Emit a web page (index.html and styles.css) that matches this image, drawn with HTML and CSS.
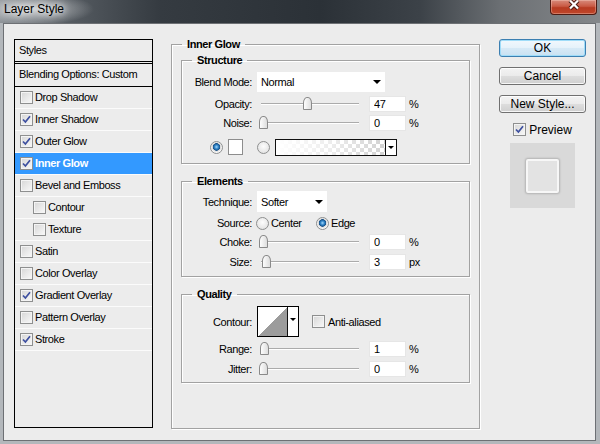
FILE: index.html
```html
<!DOCTYPE html>
<html lang="en">
<head>
    <meta charset="UTF-8">
    <meta name="viewport" content="width=device-width, initial-scale=1.0">
    <title>Layer Style</title>
    <link rel="stylesheet" href="styles.css">
</head>
<body>
    <div class="window">
        <div class="titlebar">
            <span class="title">Layer Style</span>
            <div class="close-btn">
                <svg width="14" height="11" viewBox="0 0 14 11">
                    <path d="M3 0.5 L11 8.5 M11 0.5 L3 8.5" stroke="#4a1a12" stroke-width="4.2"/>
                    <path d="M3 0.5 L11 8.5 M11 0.5 L3 8.5" stroke="#fff" stroke-width="2.2"/>
                </svg>
            </div>
        </div>

        <div class="dialog">
            <!-- liste des styles -->
            <div class="styles-list">
                <div class="list-head">Styles</div>
                <div class="list-blend">Blending Options: Custom</div>
                <div class="list-item"><span class="check"></span>Drop Shadow</div>
                <div class="list-item"><span class="check"><svg viewBox="0 0 11 11"><path d="M2 5.5 L4.4 8 L9 2.2"/></svg></span>Inner Shadow</div>
                <div class="list-item"><span class="check"><svg viewBox="0 0 11 11"><path d="M2 5.5 L4.4 8 L9 2.2"/></svg></span>Outer Glow</div>
                <div class="list-item selected"><span class="check"><svg viewBox="0 0 11 11"><path d="M2 5.5 L4.4 8 L9 2.2"/></svg></span>Inner Glow</div>
                <div class="list-item"><span class="check"></span>Bevel and Emboss</div>
                <div class="list-item sub"><span class="check"></span>Contour</div>
                <div class="list-item sub"><span class="check"></span>Texture</div>
                <div class="list-item"><span class="check"></span>Satin</div>
                <div class="list-item"><span class="check"></span>Color Overlay</div>
                <div class="list-item"><span class="check"><svg viewBox="0 0 11 11"><path d="M2 5.5 L4.4 8 L9 2.2"/></svg></span>Gradient Overlay</div>
                <div class="list-item"><span class="check"></span>Pattern Overlay</div>
                <div class="list-item"><span class="check"><svg viewBox="0 0 11 11"><path d="M2 5.5 L4.4 8 L9 2.2"/></svg></span>Stroke</div>
            </div>

            <!-- panneau Inner Glow -->
            <fieldset class="group main-group">
                <legend>Inner Glow</legend>

                <fieldset class="group sub-group structure">
                    <legend>Structure</legend>
                    <div class="row blend-row">
                        <span class="lbl">Blend Mode:</span>
                        <div class="select select-wide">Normal<span class="arrow"></span></div>
                    </div>
                    <div class="row slider-row">
                        <span class="lbl">Opacity:</span>
                        <div class="slider"><span class="track"></span><span class="thumb" style="left: 46px"></span></div>
                        <input class="num" type="text" value="47" readonly>
                        <span class="unit">%</span>
                    </div>
                    <div class="row slider-row">
                        <span class="lbl">Noise:</span>
                        <div class="slider"><span class="track"></span><span class="thumb" style="left: 2px"></span></div>
                        <input class="num" type="text" value="0" readonly>
                        <span class="unit">%</span>
                    </div>
                    <div class="row color-row">
                        <span class="radio on"></span>
                        <span class="swatch"></span>
                        <span class="radio radio-gap"></span>
                        <div class="gradient-pick"><span class="grad"></span><span class="grad-arrow"><span class="arrow"></span></span></div>
                    </div>
                </fieldset>

                <fieldset class="group sub-group elements">
                    <legend>Elements</legend>
                    <div class="row technique-row">
                        <span class="lbl">Technique:</span>
                        <div class="select select-small">Softer<span class="arrow"></span></div>
                    </div>
                    <div class="row source-row">
                        <span class="lbl">Source:</span>
                        <span class="opt opt-first"><span class="radio"></span><span class="opt-text">Center</span></span>
                        <span class="opt"><span class="radio on"></span><span class="opt-text">Edge</span></span>
                    </div>
                    <div class="row slider-row tall">
                        <span class="lbl">Choke:</span>
                        <div class="slider"><span class="track"></span><span class="thumb" style="left: 2px"></span></div>
                        <input class="num" type="text" value="0" readonly>
                        <span class="unit">%</span>
                    </div>
                    <div class="row slider-row tall">
                        <span class="lbl">Size:</span>
                        <div class="slider"><span class="track"></span><span class="thumb" style="left: 5px"></span></div>
                        <input class="num" type="text" value="3" readonly>
                        <span class="unit">px</span>
                    </div>
                </fieldset>

                <fieldset class="group sub-group quality">
                    <legend>Quality</legend>
                    <div class="row contour-row">
                        <span class="lbl">Contour:</span>
                        <div class="contour"><span class="curve"></span><span class="contour-arrow"><span class="arrow"></span></span></div>
                        <span class="check anti"></span>
                        <span class="opt-text">Anti-aliased</span>
                    </div>
                    <div class="row slider-row range-row">
                        <span class="lbl">Range:</span>
                        <div class="slider"><span class="track"></span><span class="thumb" style="left: 3px"></span></div>
                        <input class="num" type="text" value="1" readonly>
                        <span class="unit">%</span>
                    </div>
                    <div class="row slider-row range-row">
                        <span class="lbl">Jitter:</span>
                        <div class="slider"><span class="track"></span><span class="thumb" style="left: 2px"></span></div>
                        <input class="num" type="text" value="0" readonly>
                        <span class="unit">%</span>
                    </div>
                </fieldset>
            </fieldset>

            <!-- boutons -->
            <div class="side">
                <button class="btn btn-default">OK</button>
                <button class="btn">Cancel</button>
                <button class="btn">New Style...</button>
                <div class="preview-check">
                    <span class="check"><svg viewBox="0 0 11 11"><path d="M2 5.5 L4.4 8 L9 2.2"/></svg></span>
                    <span>Preview</span>
                </div>
                <div class="preview">
                    <div class="preview-swatch"></div>
                </div>
            </div>
        </div>
    </div>
</body>
</html>
```

FILE: styles.css
```css
body {
    margin: 0;
    background: #b3b7bb;
    font-family: "Liberation Sans", Arial, sans-serif;
}

.window {
    width: 600px;
    height: 444px;
    display: flex;
    flex-direction: column;
}

/* Barre de titre */
.titlebar {
    height: 23px;
    flex: none;
    display: flex;
    justify-content: space-between;
    align-items: flex-start;
    background:
        radial-gradient(ellipse 60px 16px at 34px 9px, rgba(230, 232, 234, 0.75), rgba(230, 232, 234, 0)),
        linear-gradient(90deg, #8e9398 0, #555b61 70px, #353b41 160px, #2b3137 320px, #3c4248 420px, #6b6f73 500px, #85888b 600px);
}

.title {
    padding-left: 4px;
    font-size: 12px;
    line-height: 18px;
    color: #000;
    text-shadow: 0 0 6px #fff, 0 0 10px rgba(255, 255, 255, 0.8);
}

.close-btn {
    width: 45px;
    height: 14px;
    margin-right: 3px;
    border: 1px solid #4e1b13;
    border-top: none;
    border-radius: 0 0 4px 4px;
    background: linear-gradient(#d88b7c 0, #c95a44 45%, #b73b22 55%, #c0462a 100%);
    box-shadow: inset 0 0 0 1px rgba(255, 220, 210, 0.35);
    display: flex;
    justify-content: center;
    align-items: flex-start;
}

.close-btn svg {
    display: block;
}

/* Contenu */
.dialog {
    flex: 1;
    margin: 0 4px 3px 3px;
    border: 1px solid #6d7074;
    background: #ececec;
    display: flex;
    align-items: flex-start;
    padding: 13px 0 0 10px;
    font-size: 11px;
    letter-spacing: -0.4px;
    color: #000;
}

/* Liste des styles */
.styles-list {
    box-sizing: border-box;
    width: 139px;
    height: 389px;
    margin-top: 2px;
    border: 1px solid #000;
    background: #ececec;
}

.list-head {
    height: 21px;
    line-height: 20px;
    padding-left: 4px;
    border-bottom: 1px solid #000;
}

.list-blend {
    height: 22px;
    line-height: 21px;
    padding-left: 4px;
    margin-top: 1px;
    border-top: 1px solid #000;
    border-bottom: 1px solid #000;
}

.list-item {
    height: 20px;
    padding-bottom: 1px;
    display: flex;
    align-items: center;
    padding-left: 5px;
    border-bottom: 1px solid #fbfbfb;
}

.list-item.sub {
    padding-left: 18px;
}

.list-item .check {
    margin-right: 2px;
}

.list-item.selected {
    background: #3399ff;
    color: #fff;
    font-weight: bold;
}

.check {
    box-sizing: border-box;
    width: 13px;
    height: 13px;
    flex: none;
    border: 1px solid #8e8f8f;
    background: linear-gradient(135deg, #d6d6d6, #f9f9f9);
    box-shadow: inset 0 0 0 1px #f4f4f4;
}

.check svg {
    display: block;
    width: 11px;
    height: 11px;
}

.check path {
    fill: none;
    stroke: #3d4f9f;
    stroke-width: 1.7;
}

/* Groupes */
.group {
    margin: 0;
    padding: 0;
    min-width: 0;
    border: 1px solid #a2a2a2;
    box-shadow: 1px 1px 0 #fff, inset 1px 1px 0 #fff;
}

.group legend {
    font-weight: bold;
    line-height: 14px;
    padding: 0 5px;
}

.main-group {
    box-sizing: border-box;
    width: 309px;
    height: 392px;
    margin-left: 18px;
    padding: 0 9px;
}

.main-group > legend {
    margin-left: 1px;
}

.sub-group > legend {
    margin-left: 10px;
}

.structure {
    margin-top: 2px;
    padding-bottom: 7px;
}

.elements {
    margin-top: 10px;
    padding-bottom: 4px;
}

.quality {
    margin-top: 10px;
    padding-bottom: 3px;
}

.row {
    display: flex;
    align-items: center;
}

.lbl {
    width: 70px;
    flex: none;
    text-align: right;
}

.blend-row {
    margin-top: 5px;
    height: 20px;
}

.slider-row {
    height: 19px;
}

.blend-row + .slider-row {
    margin-top: 2px;
}

.slider-row.tall,
.range-row {
    height: 20px;
}

.select {
    box-sizing: border-box;
    height: 20px;
    margin-left: 5px;
    padding-left: 4px;
    background: #fff;
    display: flex;
    align-items: center;
    justify-content: space-between;
}

.select-wide {
    width: 128px;
}

.select-small {
    width: 70px;
    height: 21px;
}

.arrow {
    width: 0;
    height: 0;
    border-left: 4px solid transparent;
    border-right: 4px solid transparent;
    border-top: 4px solid #000;
    margin-right: 4px;
}

.slider {
    position: relative;
    width: 106px;
    height: 100%;
    margin-left: 5px;
    flex: none;
}

.track {
    position: absolute;
    left: 4px;
    right: 4px;
    top: 9px;
    height: 1px;
    background: #ababab;
    border-bottom: 1px solid #fff;
}

.thumb {
    position: absolute;
    top: 3px;
    box-sizing: border-box;
    width: 9px;
    height: 13px;
    border: 1px solid #8a8a8a;
    border-radius: 4px 4px 1px 1px / 6px 6px 1px 1px;
    background: linear-gradient(90deg, #fdfdfd, #dedede);
}

.num {
    box-sizing: border-box;
    width: 37px;
    height: 16px;
    margin: 0 0 0 6px;
    padding: 0 0 0 4px;
    border: 1px solid #e6e6e6;
    background: #fff;
    font: inherit;
    letter-spacing: inherit;
    color: #000;
    outline: none;
}

.unit {
    margin-left: 3px;
}

/* Couleur */
.color-row {
    margin-top: 6px;
    height: 18px;
    padding-left: 28px;
}

.radio {
    box-sizing: border-box;
    width: 13px;
    height: 13px;
    flex: none;
    border: 1px solid #8e8f8f;
    border-radius: 50%;
    background: radial-gradient(circle at 50% 40%, #fdfdfd, #dcdcdc);
}

.radio.on {
    background: radial-gradient(circle at 50% 45%, #a5d8fa 0, #2f84c8 2px, #174f86 3.5px, #dadada 4px, #f8f8f8 5.5px);
}

.swatch {
    box-sizing: border-box;
    width: 15px;
    height: 16px;
    margin-left: 5px;
    border: 1px solid #8d8d8d;
    background: #fff;
}

.radio-gap {
    margin-left: 14px;
}

.gradient-pick {
    box-sizing: border-box;
    width: 122px;
    height: 17px;
    margin-left: 5px;
    border: 1px solid #111;
    display: flex;
}

.grad {
    flex: 1;
    background:
        linear-gradient(90deg, #fff 0, rgba(255, 255, 255, 0.6) 50%, rgba(255, 255, 255, 0) 100%),
        repeating-conic-gradient(#d2d2d2 0 25%, #fff 0 50%) 0 0 / 8px 8px;
}

.grad-arrow,
.contour-arrow {
    width: 10px;
    border-left: 1px solid #111;
    background: #fff;
    display: flex;
    align-items: center;
    justify-content: center;
}

.grad-arrow .arrow,
.contour-arrow .arrow {
    margin: 0;
    border-left-width: 3px;
    border-right-width: 3px;
    border-top-width: 3px;
}

/* Elements */
.technique-row {
    margin-top: 3px;
}

.source-row {
    margin-top: 2px;
    height: 18px;
}

.opt {
    display: flex;
    align-items: center;
}

.opt-first {
    width: 60px;
    margin-left: 4px;
}

.opt-text {
    margin-left: 2px;
}

/* Qualite */
.contour-row {
    margin-top: 5px;
}

.contour {
    box-sizing: border-box;
    width: 42px;
    height: 31px;
    margin-left: 5px;
    border: 1px solid #000;
    display: flex;
}

.curve {
    flex: 1;
    background: linear-gradient(to top left, #9c9c9c 50%, #fff 50%);
}

.contour-arrow .arrow {
    margin-bottom: 4px;
}

.check.anti {
    margin-left: 13px;
}

.contour-row .opt-text {
    margin-left: 3px;
}

.range-row {
    margin-top: 0;
}

.contour-row + .range-row {
    margin-top: 2px;
}

/* Colonne de droite */
.side {
    width: 87px;
    margin-left: 19px;
    margin-top: 2px;
    display: flex;
    flex-direction: column;
    align-items: center;
    letter-spacing: 0;
}

.btn {
    width: 87px;
    height: 18px;
    margin: 0 0 10px;
    padding: 0;
    border: 1px solid #707070;
    border-radius: 3px;
    background: linear-gradient(#f3f3f3 0, #ebebeb 48%, #dddddd 52%, #cfcfcf 100%);
    box-shadow: inset 0 0 0 1px rgba(255, 255, 255, 0.8);
    font-family: "Liberation Sans", Arial, sans-serif;
    font-size: 12px;
    line-height: 14px;
    color: #000;
}

.btn-default {
    border-color: #3c7fb1;
    background: linear-gradient(#f1f8fd 0, #e6f2fa 48%, #d6e9f6 52%, #c9e1f2 100%);
    box-shadow: inset 0 0 0 1px #9fdcf8;
}

.preview-check {
    display: flex;
    align-items: center;
    height: 13px;
    font-size: 12px;
}

.preview-check .check {
    margin-right: 3px;
}

.preview {
    width: 65px;
    height: 65px;
    margin-top: 7px;
    background: #d9d9d9;
    display: flex;
    align-items: center;
    justify-content: center;
}

.preview-swatch {
    box-sizing: border-box;
    width: 33px;
    height: 34px;
    border: 2px solid #f7f7f7;
    border-radius: 2px;
    background: #e3e3e3;
    box-shadow: 0 0 2px 1px rgba(0, 0, 0, 0.18);
}
```
